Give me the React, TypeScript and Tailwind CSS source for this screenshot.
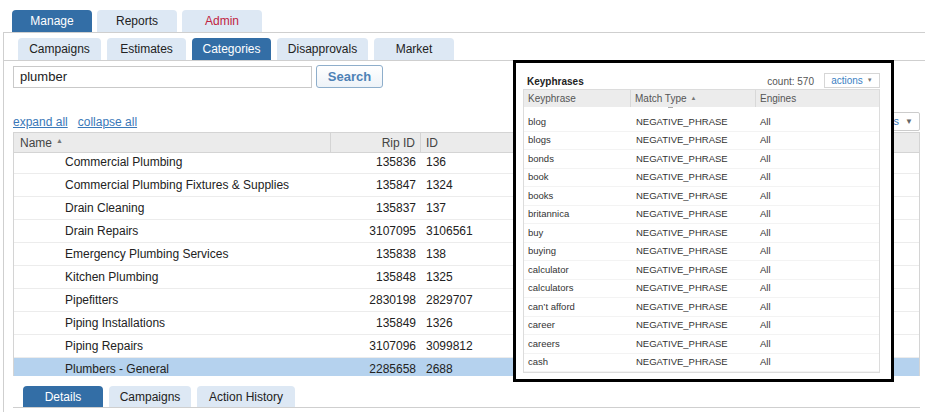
import React from 'react';

const TOP_TABS = [
  { label: 'Manage', active: true },
  { label: 'Reports' },
  { label: 'Admin', red: true },
];

const SUB_TABS = [
  { label: 'Campaigns', w: 'w-[83px]' },
  { label: 'Estimates', w: 'w-[79px]' },
  { label: 'Categories', w: 'w-[79px]', active: true },
  { label: 'Disapprovals', w: 'w-[91px]' },
  { label: 'Market', w: 'w-[80px]' },
];

const CATEGORIES = [
  ['Commercial Plumbing', '135836', '136'],
  ['Commercial Plumbing Fixtures & Supplies', '135847', '1324'],
  ['Drain Cleaning', '135837', '137'],
  ['Drain Repairs', '3107095', '3106561'],
  ['Emergency Plumbing Services', '135838', '138'],
  ['Kitchen Plumbing', '135848', '1325'],
  ['Pipefitters', '2830198', '2829707'],
  ['Piping Installations', '135849', '1326'],
  ['Piping Repairs', '3107096', '3099812'],
  ['Plumbers - General', '2285658', '2688'],
];

const KEYPHRASES = [
  'blog',
  'blogs',
  'bonds',
  'book',
  'books',
  'britannica',
  'buy',
  'buying',
  'calculator',
  'calculators',
  'can\u2019t afford',
  'career',
  'careers',
  'cash',
];

const Tab: React.FC<{ label: string; active?: boolean; red?: boolean; className?: string }> = ({
  label,
  active,
  red,
  className,
}) => (
  <div
    className={
      'flex items-center justify-center rounded-t-[4px] text-[12px] ' +
      (active ? 'bg-[#336ea6] text-white ' : 'bg-[#dde8f4] ' + (red ? 'text-[#c0233f] ' : 'text-[#222] ')) +
      (className ?? '')
    }
  >
    {label}
  </div>
);

const SortUp = () => <span className="ml-[4px] text-[7px] text-[#777] relative top-[-1px]">▲</span>;

const App: React.FC = () => {
  return (
    <div className="relative w-[925px] h-[412px] overflow-hidden bg-white font-['Liberation_Sans',Arial,sans-serif] text-[#222]">
      <div className="flex gap-[5px] pl-[12px] pt-[10px]">
        {TOP_TABS.map((t) => (
          <Tab key={t.label} label={t.label} active={t.active} red={t.red} className="w-[80px] h-[22px]" />
        ))}
      </div>

      <div className="ml-[3px] h-[380px] border-l border-t border-[#cfcfcf]">
        <div className="flex gap-[6px] pl-[14px] pt-[5px] border-b border-[#cfcfcf]">
          {SUB_TABS.map((t) => (
            <Tab key={t.label} label={t.label} active={t.active} className={t.w + ' h-[22px]'} />
          ))}
        </div>

        <div className="pl-[9px] pr-[5px]">
          <div className="flex gap-[4px] mt-[5px]">
            <div className="w-[299px] h-[22px] border border-[#c9c9c9] flex items-center pl-[6px] text-[13px]">
              plumber
            </div>
            <button className="w-[67px] h-[23px] -mt-[1px] rounded-[3px] border border-[#8eaecb] bg-gradient-to-b from-white to-[#eef3f8] text-[13px] font-bold text-[#4d82b6]">
              Search
            </button>
          </div>

          <div className="flex justify-between items-center mt-[24px] h-[19px]">
            <div className="flex gap-[10px] text-[12px] text-[#3a78b8] underline">
              <span>expand all</span>
              <span>collapse all</span>
            </div>
            <div className="h-[19px] flex items-center gap-[6px] px-[6px] border border-[#ccc] rounded-[2px] bg-white text-[11px] text-[#3a78b8]">
              columns <span className="text-[8px] text-[#666]">▼</span>
            </div>
          </div>

          <div className="mt-[1px] border-x border-[#d4d4d4]">
            <div className="flex h-[21px] items-center bg-[#ebebeb] border-y border-[#d4d4d4] text-[12px] text-[#444]">
              <div className="w-[317px] pl-[6px] border-r border-[#d4d4d4] h-full flex items-center">
                Name
                <SortUp />
              </div>
              <div className="w-[90px] pr-[5px] text-right border-r border-[#d4d4d4] h-full flex items-center justify-end">
                Rip ID
              </div>
              <div className="pl-[5px]">ID</div>
            </div>
            <div className="h-[223px] overflow-hidden">
              <div className="-mt-[2px]">
                {CATEGORIES.map(([name, rip, id], i) => (
                  <div
                    key={name}
                    className={
                      'flex h-[23px] items-center text-[12px] border-b border-[#ececec] ' +
                      (i === CATEGORIES.length - 1 ? 'bg-[#b5d2ee]' : '')
                    }
                  >
                    <div className="w-[317px] pl-[51px]">{name}</div>
                    <div className="w-[90px] pr-[5px] text-right">{rip}</div>
                    <div className="pl-[5px]">{id}</div>
                  </div>
                ))}
              </div>
            </div>
          </div>

          <div className="flex gap-[6px] pl-[10px] mt-[10px] border-b border-[#cfcfcf]">
            <Tab label="Details" active className="w-[80px] h-[21px]" />
            <Tab label="Campaigns" className="w-[82px] h-[21px]" />
            <Tab label="Action History" className="w-[98px] h-[21px]" />
          </div>
        </div>
      </div>

      <div className="absolute left-[513px] top-[60px] w-[381px] h-[322px] border-[3px] border-black bg-white px-[7px] pt-[10px]">
        <div className="flex h-[16px] items-center justify-between">
          <span className="pl-[4px] text-[10px] font-bold text-[#222]">Keyphrases</span>
          <div className="flex items-center gap-[10px] mr-[4px]">
            <span className="text-[10px] text-[#555]">count: 570</span>
            <div className="h-[15px] w-[56px] -mt-[1px] flex items-center justify-center gap-[4px] border border-[#d6d6d6] text-[10px] text-[#3b7fc4]">
              actions <span className="text-[6px] text-[#777]">▼</span>
            </div>
          </div>
        </div>

        <div className="w-[357px] h-[284px] border border-[#dcdcdc]">
          <div className="flex h-[17px] items-center bg-[#ececec] text-[10px] text-[#555]">
            <div className="w-[107px] pl-[4px] h-full flex items-center border-r border-[#d8d8d8]">Keyphrase</div>
            <div className="relative w-[125px] pl-[4px] h-full flex items-center border-r border-[#d8d8d8]">
              Match Type
              <span className="ml-[4px] text-[6px] text-[#777]">▲</span>
              <span className="absolute left-[37px] top-[17px] w-[5px] h-[1px] bg-[#aaa]" />
            </div>
            <div className="pl-[4px]">Engines</div>
          </div>
          <div className="mt-[6px]">
            {KEYPHRASES.map((k) => (
              <div key={k} className="flex h-[18.5px] items-center text-[9.5px] text-[#333] border-b border-[#f3f3f3]">
                <div className="w-[107px] pl-[4px]">{k}</div>
                <div className="w-[125px] pl-[5px]">NEGATIVE_PHRASE</div>
                <div className="pl-[4px]">All</div>
              </div>
            ))}
          </div>
        </div>
      </div>
    </div>
  );
};

export default App;
